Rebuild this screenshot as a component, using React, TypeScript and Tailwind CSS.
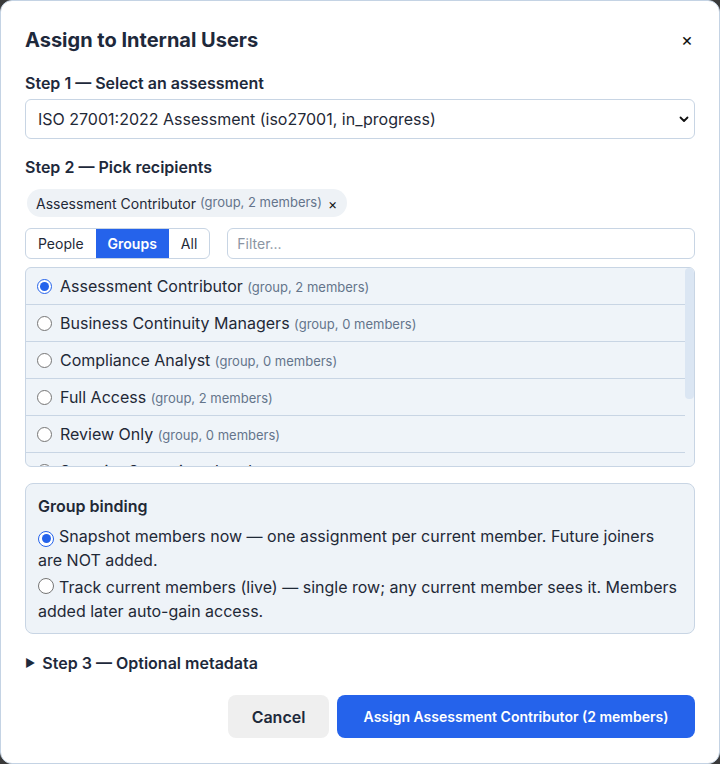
import React from 'react';

type Group = { name: string; members: number };

const GROUPS: Group[] = [
  { name: 'Assessment Contributor', members: 2 },
  { name: 'Business Continuity Managers', members: 0 },
  { name: 'Compliance Analyst', members: 0 },
  { name: 'Full Access', members: 2 },
  { name: 'Review Only', members: 0 },
  { name: 'Security Operations Lead', members: 1 },
];

function Radio({ checked, size = 'sm' }: { checked?: boolean; size?: 'sm' | 'md' }) {
  const box = size === 'md' ? 'h-[16px] w-[16px]' : 'h-[15px] w-[15px]';
  return (
    <span
      className={
        'inline-flex shrink-0 items-center justify-center rounded-full border ' +
        box +
        ' ' +
        (checked ? 'border-[#2563eb] bg-white' : 'border-[#767676] bg-white')
      }
    >
      {checked && <span className="h-[9px] w-[9px] rounded-full bg-[#2563eb]" />}
    </span>
  );
}

export default function App() {
  const [tab, setTab] = React.useState<'people' | 'groups' | 'all'>('groups');
  const [selected, setSelected] = React.useState('Assessment Contributor');
  const [binding, setBinding] = React.useState<'snapshot' | 'live'>('snapshot');

  const tabClass = (t: string) =>
    'px-3 h-full flex items-center ' + (tab === t ? 'bg-[#2563eb] font-semibold text-white' : 'text-[#1f2937]');

  return (
    <div className="h-[764px] w-[720px] bg-[#3a3a3a] font-['Inter',sans-serif] text-[#1e293b]">
      <div className="flex h-full flex-col rounded-[12px] border border-[#c4d3e4] bg-white px-6 pt-[25px]">
        <div className="flex h-[28px] items-center justify-between">
          <h2 className="text-[20px] font-bold text-[#1e293b]">Assign to Internal Users</h2>
          <button className="mr-[2px] text-[18px] leading-none text-[#111]">×</button>
        </div>

        <div className="mt-[17px] text-[16px] leading-[24px] font-semibold">Step 1 — Select an assessment</div>
        <div className="mt-[4px] flex h-[40px] items-center justify-between rounded-[6px] border border-[#c8d5e4] pl-[12px] pr-[4px] text-[16px] text-[#1f2937]">
          <span>ISO 27001:2022 Assessment (iso27001, in_progress)</span>
          <svg width="12" height="12" viewBox="0 0 12 12" fill="none">
            <path d="M2.5 4.5L6 8l3.5-3.5" stroke="#111" strokeWidth="1.8" strokeLinecap="round" strokeLinejoin="round" />
          </svg>
        </div>

        <div className="mt-[16px] text-[16px] leading-[24px] font-semibold">Step 2 — Pick recipients</div>
        <div className="mt-[10px] flex">
          <span className="ml-[2px] flex h-[28px] items-center gap-1 rounded-full bg-[#eef2f6] pl-[9px] pr-[10px] text-[14px] text-[#1f2937]">
            Assessment Contributor <span className="text-[13px] text-[#64748b]">(group, 2 members)</span>
            <span className="ml-[2px] text-[14px] text-[#111]">×</span>
          </span>
        </div>

        <div className="mt-[11px] flex items-center gap-[17px]">
          <div className="flex h-[31px] overflow-hidden rounded-[6px] border border-[#c8d5e4] text-[14px]">
            <button className={tabClass('people')} onClick={() => setTab('people')}>
              People
            </button>
            <button className={tabClass('groups')} onClick={() => setTab('groups')}>
              Groups
            </button>
            <button className={tabClass('all')} onClick={() => setTab('all')}>
              All
            </button>
          </div>
          <input
            className="h-[31px] flex-1 rounded-[6px] border border-[#c8d5e4] px-[9px] text-[14px] outline-none placeholder:text-[#8b95a3]"
            placeholder="Filter..."
          />
        </div>

        <div className="mt-[8px] flex h-[200px] overflow-hidden rounded-[6px] border border-[#c8d5e4] bg-[#eff4f9]">
          <div className="flex-1">
            {GROUPS.map((g) => (
              <div
                key={g.name}
                className="flex h-[37px] items-center gap-[8px] border-b border-[#c8d5e4] pl-[11px] text-[16px] text-[#1f2937]"
                onClick={() => setSelected(g.name)}
              >
                <Radio checked={selected === g.name} />
                <span>
                  {g.name}{' '}
                  <span className="text-[13px] text-[#64748b]">(group, {g.members} members)</span>
                </span>
              </div>
            ))}
          </div>
          <div className="w-[9px] bg-[#eff4f9]">
            <div className="h-[131px] rounded-[4px] bg-[#dbe6f3]" />
          </div>
        </div>

        <div className="mt-[16px] rounded-[8px] border border-[#c8d5e4] bg-[#eef3f8] px-[12px] pb-[10px] pt-[10px] text-[#1f2937]">
          <div className="text-[16px] leading-[24px] font-semibold">Group binding</div>
          <label className="mt-[6px] block text-[16px] leading-[24px]" onClick={() => setBinding('snapshot')}>
            <span className="mr-[5px] inline-flex translate-y-[1px]">
              <Radio size="md" checked={binding === 'snapshot'} />
            </span>
            Snapshot members now — one assignment per current member. Future joiners are NOT added.
          </label>
          <label className="mt-[3px] block text-[16px] leading-[24px]" onClick={() => setBinding('live')}>
            <span className="mr-[5px] inline-flex translate-y-[1px]">
              <Radio size="md" checked={binding === 'live'} />
            </span>
            Track current members (live) — single row; any current member sees it. Members added later auto-gain access.
          </label>
        </div>

        <div className="mt-[17px] flex items-center gap-[7px] text-[16px] leading-[24px] font-semibold">
          <span className="text-[11px] text-[#1e293b]">▶</span>
          Step 3 — Optional metadata
        </div>

        <div className="mt-[20px] flex justify-end gap-[8px]">
          <button className="h-[43px] w-[101px] rounded-[8px] bg-[#efefef] text-[16px] font-semibold text-[#1e293b]">
            Cancel
          </button>
          <button className="h-[43px] w-[358px] rounded-[8px] bg-[#2563eb] text-[14px] font-semibold text-white">
            Assign Assessment Contributor (2 members)
          </button>
        </div>
      </div>
    </div>
  );
}
